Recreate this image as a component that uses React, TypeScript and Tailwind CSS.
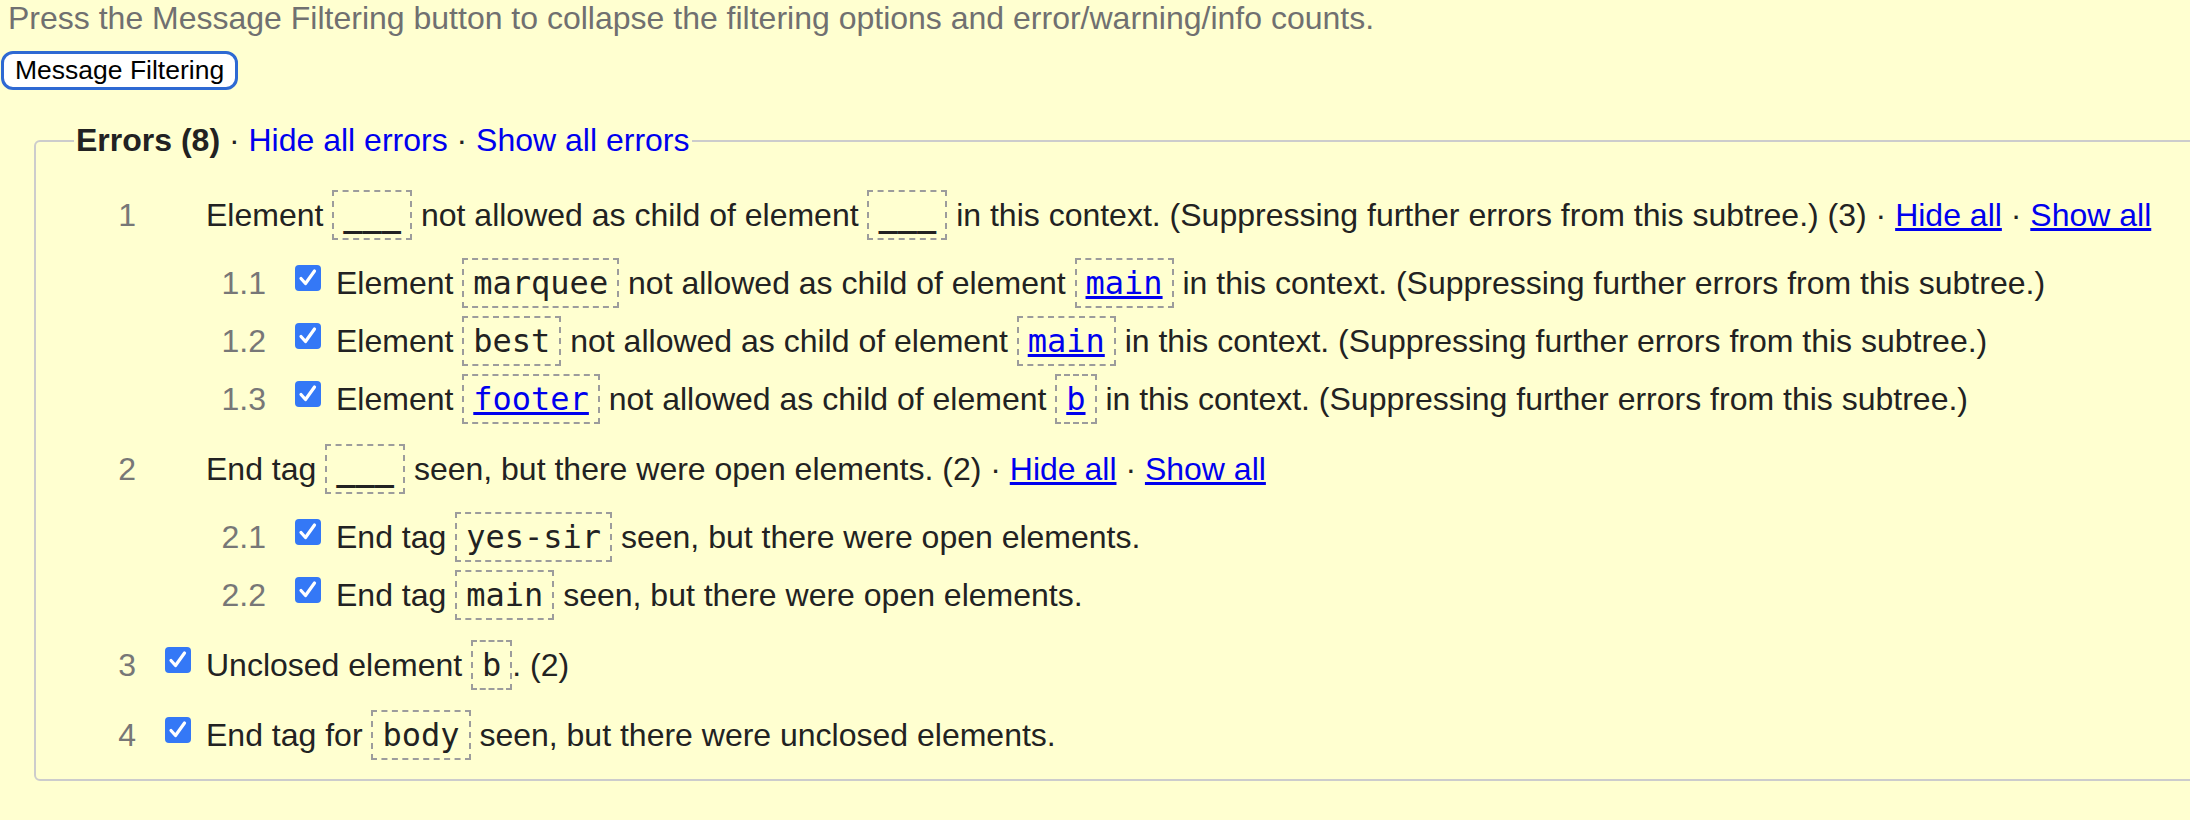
import React from "react";

const Code = ({
  children,
  link,
  blank,
}: {
  children: string;
  link?: boolean;
  blank?: boolean;
}) => (
  <span
    className={
      blank
        ? "border-2 border-dashed border-[#9c9c9c] px-[9px] py-[4px] font-['DejaVu_Sans_Mono',monospace] text-[32px] font-bold"
        : "border-2 border-dashed border-[#9c9c9c] px-[9px] py-[4px] font-['DejaVu_Sans_Mono',monospace] text-[32px]"
    }
  >
    {link ? (
      <a href="#" className="text-[#0000ee] underline">
        {children}
      </a>
    ) : (
      children
    )}
  </span>
);

const Link = ({ children }: { children: string }) => (
  <a href="#" className="text-[#0000ee] underline">
    {children}
  </a>
);

const Checkbox = () => (
  <span className="mb-[10px] flex h-[26px] w-[26px] shrink-0 items-center justify-center rounded-[4px] bg-[#3478f6]">
    <svg viewBox="0 0 26 26" className="h-[26px] w-[26px]">
      <path
        d="M6 13.5 L10.5 18.5 L19.5 6"
        fill="none"
        stroke="white"
        strokeWidth="3.2"
        strokeLinecap="round"
        strokeLinejoin="round"
      />
    </svg>
  </span>
);

const Row = ({
  num,
  checked,
  children,
}: {
  num: string;
  checked?: boolean;
  children: React.ReactNode;
}) => (
  <div className="flex h-[58px] items-center">
    <span className="w-[62px] shrink-0 text-right text-[#777]">{num}</span>
    <span className="ml-[29px] flex w-[26px] shrink-0">
      {checked && <Checkbox />}
    </span>
    <span className="ml-[15px] whitespace-nowrap">{children}</span>
  </div>
);

export default function App() {
  return (
    <div className="min-h-screen w-full overflow-hidden bg-[#ffffd0] font-['Liberation_Sans',Arial,sans-serif] text-[32px] leading-[37px] text-[#222]">
      <p className="pl-[8px] text-[#707070]">
        Press the Message Filtering button to collapse the filtering options
        and error/warning/info counts.
      </p>
      <button className="mt-[14px] ml-[1px] flex h-[39px] items-center rounded-[12px] border-[3px] border-[#2e69d3] bg-white px-[11px] text-[26.5px] leading-none text-black">
        Message Filtering
      </button>
      <fieldset className="mt-[32px] ml-[34px] w-[2300px] rounded-[6px] border-2 border-[#cccccc] pb-[15px] pl-[38px]">
        <legend className="px-[2px]">
          <b>Errors (8)</b> ·{" "}
          <a href="#" className="text-[#0000ee]">
            Hide all errors
          </a>{" "}
          ·{" "}
          <a href="#" className="text-[#0000ee]">
            Show all errors
          </a>
        </legend>
        <ol className="pt-[27px]">
          <li>
            <Row num="1">
              Element <Code blank>___</Code> not allowed as child of element{" "}
              <Code blank>___</Code> in this context. (Suppressing further
              errors from this subtree.) (3) · <Link>Hide all</Link> ·{" "}
              <Link>Show all</Link>
            </Row>
            <div className="mt-[10px] pl-[130px]">
              <Row num="1.1" checked>
                Element <Code>marquee</Code> not allowed as child of element{" "}
                <Code link>main</Code> in this context. (Suppressing further
                errors from this subtree.)
              </Row>
              <Row num="1.2" checked>
                Element <Code>best</Code> not allowed as child of element{" "}
                <Code link>main</Code> in this context. (Suppressing further
                errors from this subtree.)
              </Row>
              <Row num="1.3" checked>
                Element <Code link>footer</Code> not allowed as child of
                element <Code link>b</Code> in this context. (Suppressing
                further errors from this subtree.)
              </Row>
            </div>
          </li>
          <li className="mt-[12px]">
            <Row num="2">
              End tag <Code blank>___</Code> seen, but there were open
              elements. (2) · <Link>Hide all</Link> · <Link>Show all</Link>
            </Row>
            <div className="mt-[10px] pl-[130px]">
              <Row num="2.1" checked>
                End tag <Code>yes-sir</Code> seen, but there were open
                elements.
              </Row>
              <Row num="2.2" checked>
                End tag <Code>main</Code> seen, but there were open elements.
              </Row>
            </div>
          </li>
          <li className="mt-[12px]">
            <Row num="3" checked>
              Unclosed element <Code>b</Code>. (2)
            </Row>
          </li>
          <li className="mt-[12px]">
            <Row num="4" checked>
              End tag for <Code>body</Code> seen, but there were unclosed
              elements.
            </Row>
          </li>
        </ol>
      </fieldset>
    </div>
  );
}
